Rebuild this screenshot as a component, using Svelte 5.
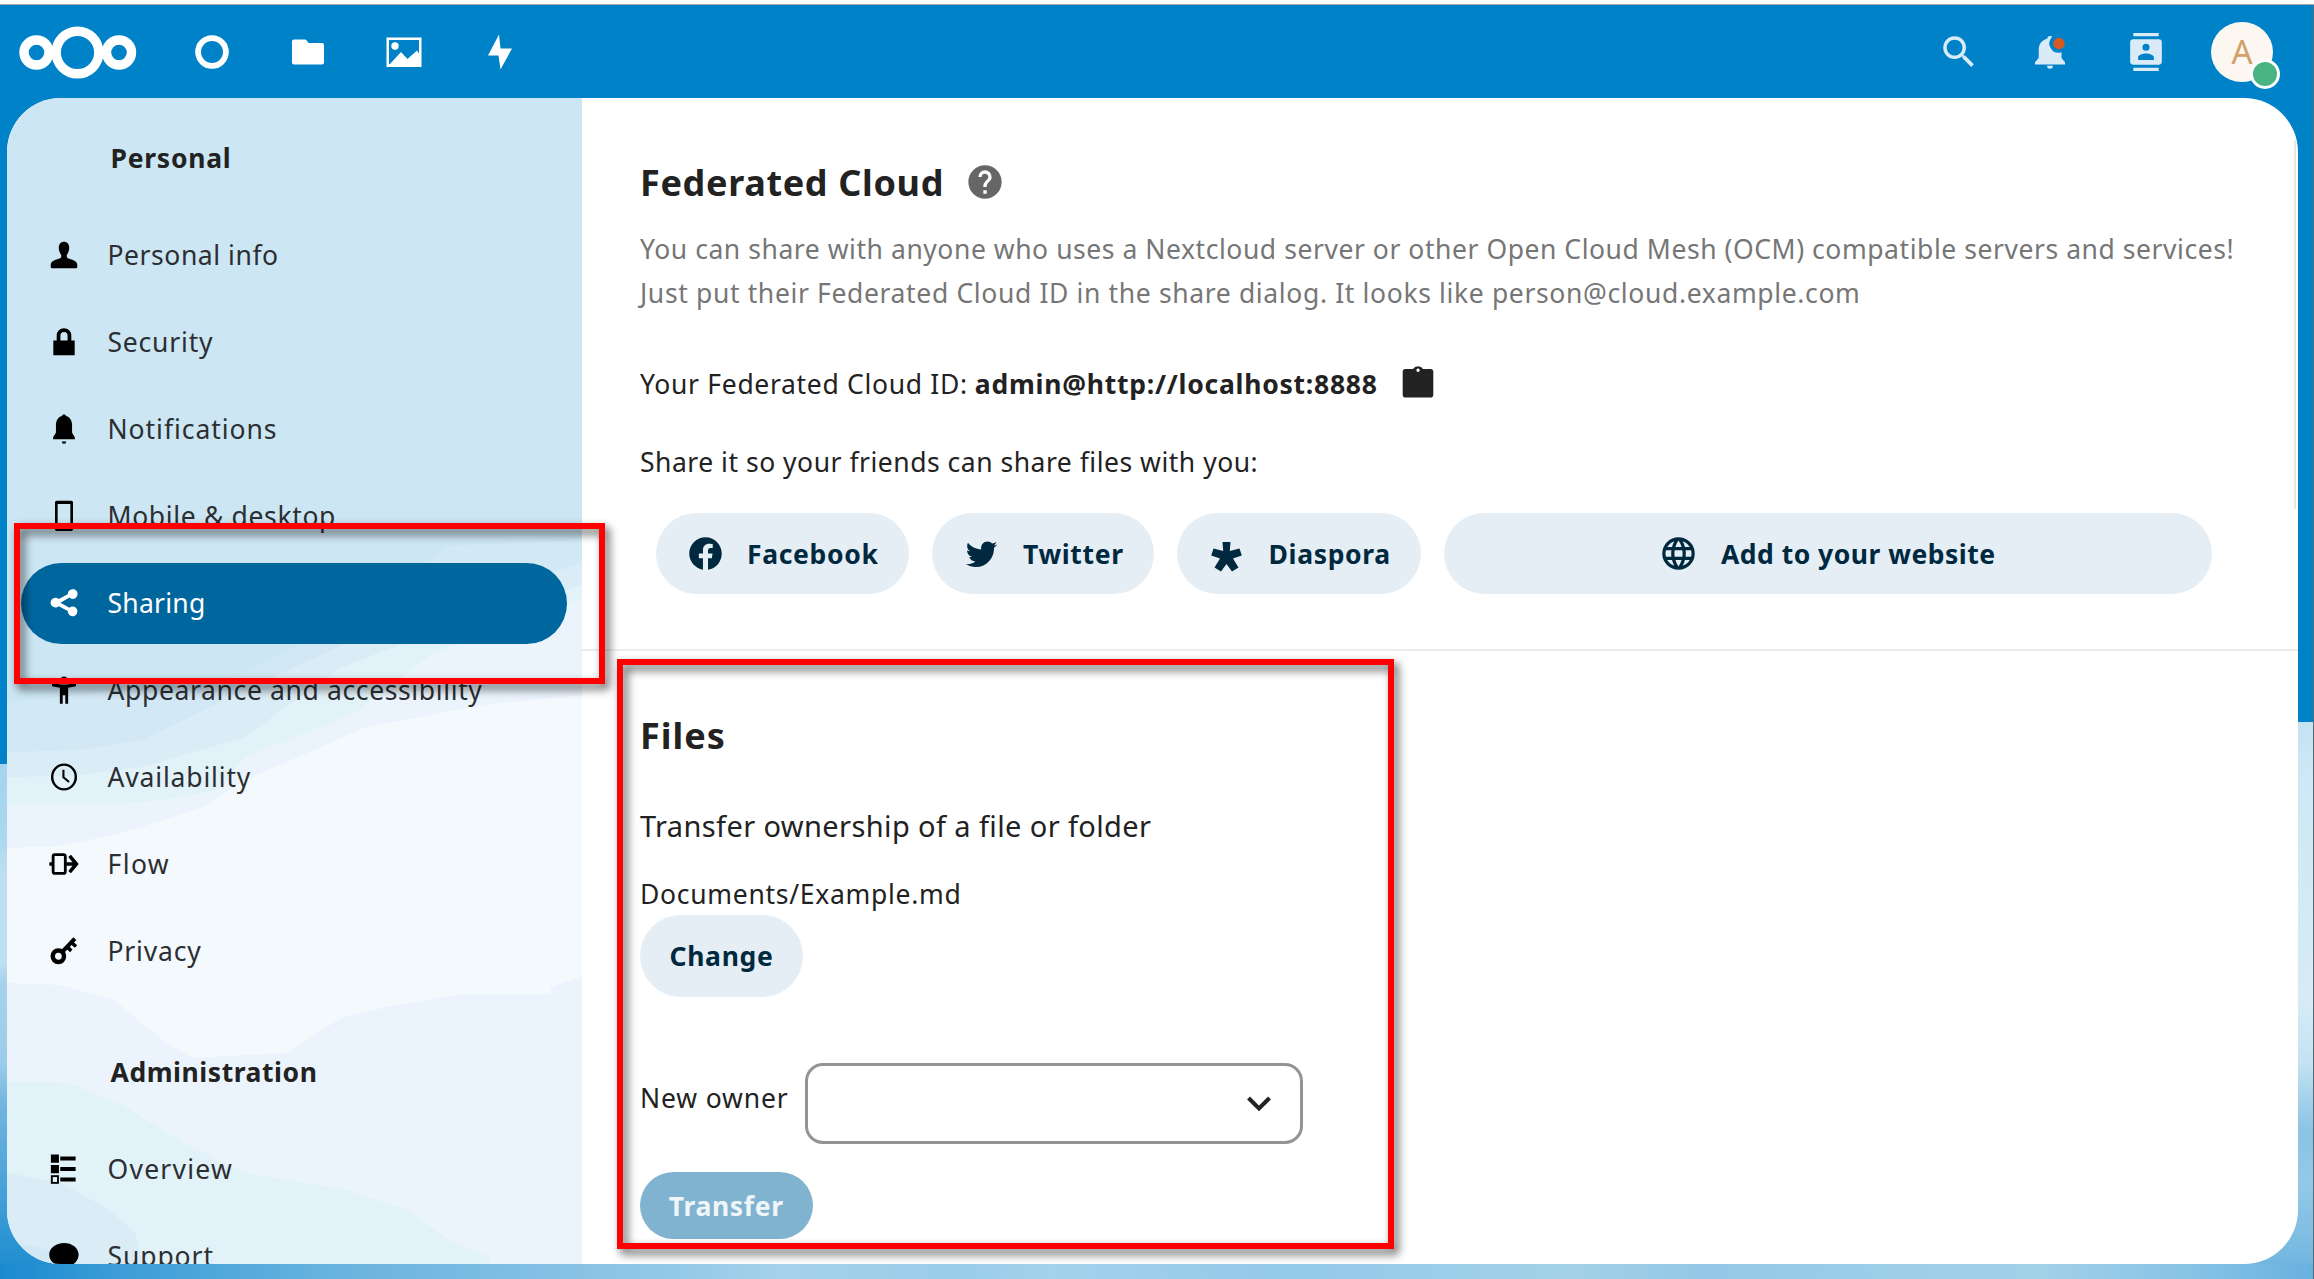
<script>
  // `tracking` is the letter spacing of a label, in pixels.
  const personal = [
    { icon: 'user', label: 'Personal info', tracking: 0.55 },
    { icon: 'lock', label: 'Security', tracking: 0.8 },
    { icon: 'bell', label: 'Notifications', tracking: 0.95 },
    { icon: 'phone', label: 'Mobile & desktop', tracking: 0.65 },
    { icon: 'share', label: 'Sharing', tracking: 0.25, active: true },
    { icon: 'person', label: 'Appearance and accessibility', tracking: 0.63 },
    { icon: 'clock', label: 'Availability', tracking: 0.83 },
    { icon: 'flow', label: 'Flow', tracking: 1.4 },
    { icon: 'key', label: 'Privacy', tracking: 0.8 }
  ];
  const admin = [
    { icon: 'list', label: 'Overview', tracking: 1.25 },
    { icon: 'chat', label: 'Support', tracking: 0.9 }
  ];
</script>

{#snippet sideIcon(name)}
  <svg class="side-icon" viewBox="0 0 16 16" aria-hidden="true">
    {#if name === 'user'}
      <path d="M8 .9C6.300.9 5.200 2.200 5.200 3.900c0 1.400.4 2.600 1 3.500.5.8.5 1.900-.2 2.300C4 10.500.9 10.700.9 13.500V14.200c0 .6.4.9.9.9H14.200c.5 0 .9-.3.9-.9V13.500c0-2.800-3.100-3-5.100-3.800-.7-.4-.7-1.500-.2-2.300.6-.9 1-2.100 1-3.500C10.800 2.200 9.700.9 8 .9z" />
    {:else if name === 'lock'}
      <path d="M8 .6A3.900 3.900 0 0 0 4.100 4.500V7.200H2.300V15H13.700V7.200H11.900V4.500A3.900 3.900 0 0 0 8 .6zm0 2A1.900 1.900 0 0 1 9.900 4.500V7.200H6.100V4.500A1.900 1.900 0 0 1 8 2.600z" />
    {:else if name === 'bell'}
      <path d="M8 .2c-.6 0-1 .3-1.100.9C4.700 1.600 3.700 3.800 3.700 6v3.500C3.700 10.900 2.200 11.500 2.200 13v.5H13.800V13c0-1.500-1.500-2.100-1.500-3.500V6c0-2.200-1-4.400-3.200-4.900C9 .5 8.600.2 8 .2zM6.800 14.600a1.200 1.200 0 0 0 2.400 0z" />
    {:else if name === 'phone'}
      <path fill-rule="evenodd" d="M4.200-.1h7.600c.6 0 1 .4 1 1V15c0 .6-.4 1-1 1H4.200c-.6 0-1-.4-1-1V.9c0-.6.4-1 1-1zM4.600 1.600V13.800h6.800V1.600z" />
    {:else if name === 'share'}
      <path d="M12.500.6A2.600 2.600 0 0 0 10 3.300L5.200 5.900A2.600 2.600 0 1 0 5.200 9.700L10 12.300A2.600 2.600 0 1 0 10.900 10.500L6.300 8V7.700L10.900 5.100A2.600 2.600 0 1 0 12.500.6z" />
    {:else if name === 'person'}
      <path d="M8 .8a1.700 1.700 0 1 0 0 3.400A1.700 1.700 0 0 0 8 .8zM1.600 4.400V6l4.200.8V15.300h1.500V10.800h1.400V15.300h1.500V6.800L14.400 6V4.400L9.500 5h-3z" />
    {:else if name === 'clock'}
      <ellipse cx="8" cy="8" rx="6.300" ry="6.600" fill="none" stroke="currentColor" stroke-width="1.300" />
      <path d="M7.700 4.200v4l3 2.500" fill="none" stroke="currentColor" stroke-width="1.100" />
    {:else if name === 'flow'}
      <path d="M.2 8H2.500M9 8H15M11 3.700 14.600 8 11 12.300" fill="none" stroke="currentColor" stroke-width="1.900" />
      <rect x="2.200" y="3" width="6.500" height="10" rx=".9" fill="none" stroke="currentColor" stroke-width="1.500" />
    {:else if name === 'key'}
      <ellipse cx="5" cy="10.800" rx="3" ry="3.100" fill="none" stroke="currentColor" stroke-width="2.400" />
      <path d="M7.200 8.300 13.800 1.400" fill="none" stroke="currentColor" stroke-width="2.200" />
      <path d="M9.600 5.800l2.300 2.100M11.900 3.400l2.500 2.200" fill="none" stroke="currentColor" stroke-width="1.900" />
    {:else if name === 'list'}
      <path d="M1 .2H5.300V4.600H1zM1 5.800H5.300V10.200H1zM6 1.300h8.200v2.200H6zM6 6.900h8.200v2.200H6zM6 12.500h8.200v2.200H6z" />
      <rect x="1.500" y="11.800" width="3.300" height="3.600" fill="none" stroke="currentColor" />
    {:else if name === 'chat'}
      <path d="M8 1C3.700 1 .1 3.700.1 7.300S3.700 13.600 8 13.600c.3 0 .6 0 .9-.1.3 1.300 1.300 2.300 3.900 2.300-.5-.8-.5-2-.3-3.100 1.900-1.200 3.300-3.100 3.300-5.400C15.900 3.700 12.300 1 8 1z" />
    {/if}
  </svg>
{/snippet}

{#snippet navList(items)}
  <ul class="nav-list">
    {#each items as item}
      <li class="nav-item" class:active={item.active}>
        {@render sideIcon(item.icon)}
        <span style:letter-spacing={`${item.tracking}px`}>{item.label}</span>
      </li>
    {/each}
  </ul>
{/snippet}

<div class="page">
  <header class="topbar">
    <svg class="logo" viewBox="0 0 118 54" role="img" aria-label="Nextcloud">
      <g fill="none" stroke="#fff" stroke-width="9.400">
        <circle cx="17.500" cy="27.500" r="12.500" />
        <circle cx="58.500" cy="27.500" r="21.300" />
        <circle cx="100" cy="27.500" r="12.500" />
      </g>
    </svg>
    <nav class="apps">
      <span class="cell"><svg width="36" height="36" viewBox="0 0 36 36"><circle cx="18" cy="18" r="13.900" fill="none" stroke="#fff" stroke-width="5.800" /></svg></span>
      <span class="cell"><svg width="36" height="36" viewBox="0 0 36 36"><path fill="#fff" d="M4 5.500H14.500q1.500 0 2.200 1L18.500 9H32q2 0 2 2V28.500q0 2-2 2H4q-2 0-2-2V7.500q0-2 2-2z" /></svg></span>
      <span class="cell"><svg width="36" height="36" viewBox="0 0 36 36"><path fill="#fff" fill-rule="evenodd" d="M.5 3.500H35.500V33H.5zM3 6V30H4L15 18l6.500 7L31 16.500 33 19.500V6z" /><circle cx="9" cy="12" r="3.700" fill="#fff" /></svg></span>
      <span class="cell"><svg width="36" height="36" viewBox="0 0 36 36"><path fill="#fff" d="M17 .5 6 21.500H16.500L18.500 35.500 30 14.500H18.500z" /></svg></span>
    </nav>
    <div class="tools">
      <span class="cell search"><svg width="42" height="42" viewBox="0 0 24 24"><path d="M9.500,3A6.500,6.500 0 0,1 16,9.500C16,11.110 15.410,12.590 14.440,13.730L14.710,14H15.500L20.500,19L19,20.500L14,15.500V14.710L13.730,14.440C12.590,15.410 11.110,16 9.500,16A6.500,6.500 0 0,1 3,9.500A6.500,6.500 0 0,1 9.500,3M9.500,5C7,5 5,7 5,9.500C5,12 7,14 9.500,14C12,14 14,12 14,9.500C14,7 12,5 9.500,5Z" /></svg></span>
      <span class="cell">
        <svg width="36" height="36" viewBox="0 0 36 36">
          <path d="M18 2c-1.700 0-2.600 1-2.600 2.400C10 6 6.700 10 6.700 15.500V24L3 28.300V30.500H33V28.300L29.500 24V18.300A9.300 9.300 0 0 1 19 4.200L20.200 2.300zM15 31.800a3 3 0 0 0 6 0z" />
          <circle cx="27" cy="9.500" r="5.700" class="dot" />
        </svg>
      </span>
      <span class="cell"><svg width="38" height="38" viewBox="0 0 24 24"><path d="M20,0H4V2H20V0M4,24H20V22H4V24M20,4H4A2,2 0 0,0 2,6V18A2,2 0 0,0 4,20H20A2,2 0 0,0 22,18V6A2,2 0 0,0 20,4M12,6.750A2.250,2.250 0 0,1 14.250,9A2.250,2.250 0 0,1 12,11.250A2.250,2.250 0 0,1 9.750,9A2.250,2.250 0 0,1 12,6.750M17,17H7V15.500C7,13.830 10.330,13 12,13C13.670,13 17,13.830 17,15.500V17Z" /></svg></span>
      <span class="cell"><span class="avatar">A<i class="status"></i></span></span>
    </div>
  </header>

  <div class="app">
    <aside class="sidebar">
      <svg class="clouds" viewBox="7 98 575 1166" preserveAspectRatio="none" aria-hidden="true">
        <path fill="#d3e8f5" d="M582 540 449 546 310 640 230 680 100 692 7 703V1264H582z" />
        <path fill="#daecf6" d="M582 562 480 600 347 643 245 690 143 740 80 750 7 752V1240L49 1250 82 1264H582z" />
        <path fill="#e2f2f9" d="M582 585 450 625 340 668 245 737 143 767 70 776 7 777V1173L61 1183 110 1210 135 1233 143 1264H582z" />
        <path fill="#ebf4fc" d="M582 598 433 653 355 713 245 757 216 790Q150 806 82 804H7V1081L69 1083 122 1105 184 1143 245 1173 347 1190 408 1210 449 1240 490 1257V1264H582z" />
        <path fill="#f4f9fe" d="M582 695 482 705 367 727 245 780 204 807 122 833 60 846 7 848V983L61 985 114 1000 163 1040 192 1058 286 1053 343 1017 396 1005 461 994H551V987L582 976z" />
      </svg>
      <div class="sidebar-body">
        <h3 class="nav-heading">Personal</h3>
        {@render navList(personal)}
        <h3 class="nav-heading second">Administration</h3>
        {@render navList(admin)}
      </div>
    </aside>

    <main class="content">
      <section class="section federated">
        <div class="title-row">
          <h2>Federated Cloud</h2>
          <svg class="help" viewBox="0 0 24 24"><path d="M15.070,11.250L14.170,12.170C13.450,12.890 13,13.500 13,15H11V14.500C11,13.390 11.450,12.390 12.170,11.670L13.410,10.410C13.780,10.050 14,9.550 14,9C14,7.890 13.100,7 12,7A2,2 0 0,0 10,9H8A4,4 0 0,1 12,5A4,4 0 0,1 16,9C16,9.880 15.640,10.670 15.070,11.250M13,19H11V17H13M12,2A10,10 0 0,0 2,12A10,10 0 0,0 12,22A10,10 0 0,0 22,12C22,6.470 17.500,2 12,2Z" /></svg>
        </div>
        <p class="desc">
          <span class="line">You can share with anyone who uses a Nextcloud server or other Open Cloud Mesh (OCM) compatible servers and services!</span>
          <span class="line last">Just put their Federated Cloud ID in the share dialog. It looks like person@cloud.example.com</span>
        </p>
        <div class="cloud-id">
          <span>Your Federated Cloud ID:</span>
          <strong>admin@http://localhost:8888</strong>
          <svg class="clipboard" viewBox="0 0 40 40"><path fill-rule="evenodd" d="M7.500 6H15Q16.500 3.300 20 3.300T25 6H32.500Q35.300 6 35.300 8.800V31.700Q35.300 34.500 32.500 34.500H7.500Q4.700 34.500 4.700 31.700V8.800Q4.700 6 7.500 6zM20 5.500a1.700 1.700 0 1 0 .1 0z" /></svg>
        </div>
        <p class="share-note">Share it so your friends can share files with you:</p>
        <div class="share-row">
          <button class="pill facebook">
            <svg class="glyph" viewBox="0 0 24 24"><path d="M12 2.040C6.500 2.040 2 6.530 2 12.060C2 17.060 5.660 21.210 10.440 21.960V14.960H7.900V12.060H10.440V9.850C10.440 7.340 11.930 5.960 14.220 5.960C15.310 5.960 16.450 6.150 16.450 6.150V8.620H15.190C13.950 8.620 13.560 9.390 13.560 10.160V12.060H16.340L15.890 14.960H13.560V21.960A10 10 0 0 0 22 12.060C22 6.530 17.500 2.040 12 2.040Z" /></svg>
            <span>Facebook</span>
          </button>
          <button class="pill twitter">
            <svg class="glyph" viewBox="-1 -1 26 26"><path d="M22.460,6C21.690,6.350 20.860,6.580 20,6.690C20.880,6.160 21.560,5.320 21.880,4.310C21.050,4.810 20.130,5.160 19.160,5.360C18.370,4.500 17.260,4 16,4C13.650,4 11.730,5.920 11.730,8.290C11.730,8.630 11.770,8.960 11.840,9.270C8.280,9.090 5.110,7.380 3,4.790C2.630,5.420 2.420,6.160 2.420,6.940C2.420,8.430 3.170,9.750 4.330,10.500C3.620,10.500 2.960,10.300 2.380,10V10.030C2.380,12.110 3.860,13.850 5.820,14.240C5.460,14.340 5.080,14.390 4.690,14.390C4.420,14.390 4.150,14.360 3.890,14.310C4.430,16 6,17.260 7.890,17.290C6.430,18.450 4.580,19.130 2.560,19.130C2.220,19.130 1.880,19.110 1.540,19.070C3.440,20.290 5.700,21 8.120,21C16,21 20.330,14.460 20.330,8.790C20.330,8.600 20.330,8.420 20.320,8.230C21.160,7.630 21.880,6.870 22.460,6Z" /></svg>
            <span>Twitter</span>
          </button>
          <button class="pill diaspora">
            <svg class="glyph" viewBox="0 0 39 39"><path d="M15.500 8h8L22.800 17 32.500 14.500 34.800 21.500 26 24.500 31.500 33.500 25 37.500 19.500 30 14 37.500 7.500 33.500 13 24.500 4.200 21.500 6.500 14.500 16.200 17z" /></svg>
            <span>Diaspora</span>
          </button>
          <button class="pill website">
            <svg class="glyph" viewBox="0 0 24 24"><path d="M16.360,14C16.440,13.340 16.500,12.680 16.500,12C16.500,11.320 16.440,10.660 16.360,10H19.740C19.900,10.640 20,11.310 20,12C20,12.690 19.900,13.360 19.740,14M14.590,19.560C15.190,18.450 15.650,17.250 15.970,16H18.920C17.960,17.650 16.430,18.930 14.590,19.560M14.340,14H9.660C9.560,13.340 9.500,12.680 9.500,12C9.500,11.320 9.560,10.650 9.660,10H14.340C14.430,10.650 14.500,11.320 14.500,12C14.500,12.680 14.430,13.340 14.340,14M12,19.960C11.170,18.760 10.500,17.430 10.090,16H13.910C13.500,17.430 12.830,18.760 12,19.960M8,8H5.080C6.030,6.340 7.570,5.060 9.400,4.440C8.800,5.550 8.350,6.750 8,8M5.080,16H8C8.350,17.250 8.800,18.450 9.400,19.560C7.570,18.930 6.030,17.650 5.080,16M4.260,14C4.100,13.360 4,12.690 4,12C4,11.310 4.100,10.640 4.260,10H7.640C7.560,10.660 7.500,11.320 7.500,12C7.500,12.680 7.560,13.340 7.640,14M12,4.030C12.830,5.230 13.500,6.570 13.910,8H10.090C10.500,6.570 11.170,5.230 12,4.030M18.920,8H15.970C15.650,6.750 15.190,5.550 14.590,4.440C16.430,5.070 17.960,6.340 18.920,8M12,2C6.470,2 2,6.500 2,12A10,10 0 0,0 12,22A10,10 0 0,0 22,12A10,10 0 0,0 12,2Z" /></svg>
            <span>Add to your website</span>
          </button>
        </div>
      </section>

      <section class="section files">
        <h2>Files</h2>
        <h3 class="transfer-title">Transfer ownership of a file or folder</h3>
        <p class="path">Documents/Example.md</p>
        <button class="pill change">Change</button>
        <div class="owner-row">
          <span class="owner-label">New owner</span>
          <div class="select">
            <svg width="26" height="18" viewBox="0 0 26 18"><path d="M2.500 3 13 13.500 23.500 3" fill="none" stroke="#222" stroke-width="4" /></svg>
          </div>
        </div>
        <button class="pill transfer">Transfer</button>
      </section>
    </main>
  </div>

  <div class="scroll-edge"></div>
  <div class="callout callout-nav"></div>
  <div class="callout callout-files"></div>
</div>

<style>
  :global(body) {
    margin: 0;
  }

  .page {
    position: relative;
    display: flex;
    flex-direction: column;
    width: 2314px;
    height: 1279px;
    overflow: hidden;
    font-family: "Noto Sans", "Open Sans", sans-serif;
    font-size: 26.5px;
    color: #222;
    background:
      linear-gradient(#5a6a75, #5a6a75) right top / 1px 100% no-repeat,
      linear-gradient(90deg, #1a8acf 0, #2a93d3 60px, #3d9dd7 120px, #52a9db 230px, #66b2df 320px, #74b8e1 420px, #85c1e5 560px, #97cbe8 700px, #a5d2eb 780px, #9acde9 960px, #a3d2ec 1050px, #94c9e8 1290px, #99cdea 1400px, #a3d2e8 1570px, #94c8e6 1700px, #9dcfe9 1900px, #a2d1e9 2040px, #85c2e5 2200px, #68b1df 2314px) left bottom / 100% 15px no-repeat,
      linear-gradient(#a6d3ee 0, #a9d7ef 70px, #bfdff1 110px, #bcdff2 200px, #a9d2ec 215px, #9acdea 300px, #72b5e0 340px, #4aa3d9 420px, #2f95d3 470px, #1a8acf 515px) left bottom / 60px 515px no-repeat,
      linear-gradient(#c3e2f2 0, #d0e8f5 60px, #d6ebf7 280px, #c5e2f2 340px, #a9d5ec 370px, #8ac3e5 410px, #93c9e8 460px, #7cbce2 520px, #68b1df 557px) right bottom / 70px 557px no-repeat,
      #0082c9;
  }

  .topbar {
    display: flex;
    flex: none;
    align-items: center;
    box-sizing: border-box;
    height: 98px;
    padding: 1.500px 24px 0 19px;
    border-top: 4px solid #fff;
    box-shadow: inset 0 1px #a3a9ad;
  }

  .logo {
    width: 118px;
    height: 54px;
    margin-right: 27px;
  }

  .apps,
  .tools {
    display: flex;
  }

  .tools {
    margin-left: auto;
    fill: #d9ebf7;
  }

  .cell {
    display: flex;
    align-items: center;
    justify-content: center;
    width: 96px;
  }

  .search {
    width: 86px;
  }

  .dot {
    fill: #d65a24;
  }

  .avatar {
    position: relative;
    width: 62px;
    height: 60px;
    border-radius: 50%;
    background: #fcf8f1;
    color: #d2a06b;
    font-size: 33px;
    line-height: 60px;
    text-align: center;
  }

  .status {
    position: absolute;
    right: -7px;
    bottom: -7px;
    width: 24px;
    height: 24px;
    border: 3.500px solid #fff;
    border-radius: 50%;
    background: #49b382;
  }

  .app {
    display: grid;
    flex: none;
    grid-template-columns: 575px 1fr;
    height: 1166px;
    margin: 0 16px 0 7px;
    border-radius: 54px;
    overflow: hidden;
    background: #fff;
  }

  .sidebar {
    display: grid;
    height: 1166px;
    overflow: hidden;
    background: #cde6f3;
  }

  .clouds,
  .sidebar-body {
    grid-area: 1 / 1;
  }

  .clouds {
    width: 575px;
    height: 1166px;
  }

  .nav-heading {
    margin: 0;
    padding: 42px 0 38.500px 103.500px;
    font-size: 26.500px;
    line-height: 36px;
    letter-spacing: 0.750px;
  }

  .nav-heading.second {
    padding: 56px 0 38.500px 103.500px;
    letter-spacing: 0.550px;
  }

  .nav-list {
    margin: 0;
    padding: 0 0 0 14px;
    list-style: none;
  }

  .nav-item {
    display: flex;
    align-items: center;
    gap: 28.500px;
    width: 518px;
    height: 81px;
    margin-bottom: 6px;
    padding-left: 28px;
    border-radius: 41px;
    color: #2b2f32;
    white-space: nowrap;
  }

  .side-icon {
    width: 30px;
    height: 30px;
    color: #000;
    fill: #000;
    overflow: visible;
  }

  .active {
    background: #00679e;
    color: #fff;
  }

  .active .side-icon {
    fill: #fff;
  }

  .section {
    padding: 62.500px 0 0 58px;
  }

  .federated {
    padding-bottom: 55px;
    border-bottom: 2px solid #ededed;
  }

  h2 {
    margin: 0;
    font-size: 36px;
    line-height: 44px;
    letter-spacing: 0.660px;
  }

  .files h2 {
    letter-spacing: 1px;
  }

  .title-row {
    display: flex;
    align-items: center;
    gap: 21px;
  }

  .help {
    width: 40px;
    height: 40px;
    margin: -2px 0 0;
    fill: #666;
  }

  p {
    margin: 0;
  }

  .desc {
    margin-top: 22.500px;
    color: #767676;
    line-height: 44.400px;
  }

  .line {
    display: block;
    letter-spacing: 0.550px;
    white-space: nowrap;
  }

  .line.last {
    letter-spacing: 0.640px;
  }

  .cloud-id {
    display: flex;
    align-items: center;
    height: 44px;
    margin-top: 46.500px;
    letter-spacing: 0.680px;
  }

  .cloud-id strong {
    margin-left: 7px;
    letter-spacing: 0.760px;
  }

  .clipboard {
    width: 40px;
    height: 40px;
    margin: -2px 0 0 20px;
    fill: #222;
  }

  .share-note {
    margin-top: 34px;
    line-height: 44px;
    letter-spacing: 0.510px;
  }

  .share-row {
    display: flex;
    gap: 23px;
    width: 1556px;
    margin: 28.500px 0 0 15.500px;
  }

  .pill {
    display: flex;
    align-items: center;
    justify-content: center;
    gap: 22.500px;
    box-sizing: border-box;
    height: 81.500px;
    padding: 0;
    border: 0;
    border-radius: 41px;
    background: #e5eef5;
    color: #00293f;
    fill: #00293f;
    font-family: inherit;
    font-size: 26.500px;
    font-weight: 700;
    letter-spacing: 0.660px;
  }

  .facebook,
  .twitter,
  .diaspora {
    justify-content: flex-start;
    padding-left: 30px;
  }

  .facebook {
    width: 253px;
  }

  .twitter {
    width: 222.500px;
  }

  .diaspora {
    width: 243.500px;
  }

  .website {
    flex: 1;
    letter-spacing: 0.500px;
  }

  .glyph {
    flex: none;
    width: 39px;
    height: 39px;
  }

  .files h2 {
    margin-top: 0.500px;
  }

  .transfer-title {
    margin: 45.500px 0 0;
    font-size: 29px;
    font-weight: 400;
    line-height: 44px;
    letter-spacing: 0.390px;
  }

  .path {
    margin-top: 24.500px;
    line-height: 44px;
    letter-spacing: 0.710px;
  }

  .change {
    width: 163px;
    margin-top: -1px;
  }

  .owner-row {
    display: flex;
    align-items: center;
    margin-top: 66.500px;
  }

  .owner-label {
    width: 165px;
    padding-bottom: 12px;
    letter-spacing: 0.850px;
  }

  .select {
    display: flex;
    align-items: center;
    justify-content: flex-end;
    box-sizing: border-box;
    width: 498px;
    height: 81px;
    padding-right: 28px;
    border: 3.500px solid #949494;
    border-radius: 18px;
    background: #fff;
  }

  .transfer {
    width: 172.500px;
    height: 67px;
    margin-top: 28px;
    background: #80b3cf;
    color: #f0f5f9;
  }

  .scroll-edge {
    position: absolute;
    top: 140px;
    left: 2294px;
    width: 2px;
    height: 369px;
    background: #e4e6e8;
  }

  .callout {
    position: absolute;
    box-sizing: border-box;
    border: 6px solid #f00;
    filter: drop-shadow(4px 5px 5px rgba(0, 0, 0, 0.650));
    pointer-events: none;
  }

  .callout-nav {
    top: 523px;
    left: 14px;
    width: 591px;
    height: 161px;
  }

  .callout-files {
    top: 659px;
    left: 617px;
    width: 777px;
    height: 590px;
  }
</style>
